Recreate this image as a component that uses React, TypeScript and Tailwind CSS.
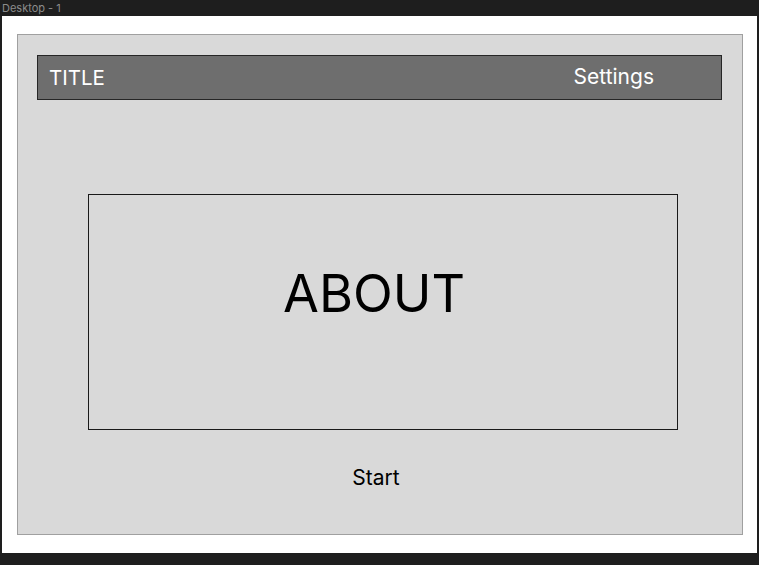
export default function App() {
  return (
    <div className="w-[759px] h-[565px] bg-[#1e1e1e] font-['Inter',sans-serif] overflow-hidden">
      <div className="h-[16px] pl-[2px] text-[11px] leading-[16px] text-[#8c8c8c]">Desktop - 1</div>

      <div className="ml-[2px] w-[755px] h-[537px] bg-white pt-[18px] pl-[15px]">
        <div className="w-[726px] h-[501px] border border-[#a0a0a0] bg-[#d9d9d9] pt-[20px]">
          <header className="ml-[19px] w-[685px] h-[45px] border border-[#262626] bg-[#6e6e6e] flex items-center justify-between pl-[11px] pr-[67px] text-[21px] leading-[24px] text-white">
            <span className="text-[20.5px]">TITLE</span>
            <span className="-mt-[2px]">Settings</span>
          </header>

          <section className="mt-[94px] ml-[70px] w-[590px] h-[236px] border border-[#1a1a1a] pt-[67px] pr-[18px] flex justify-center">
            <h1 className="text-[52px] leading-[63px] text-black">ABOUT</h1>
          </section>

          <div className="mt-[36px] pr-[8px] flex justify-center">
            <button className="text-[21px] leading-[24px] text-black">Start</button>
          </div>
        </div>
      </div>
    </div>
  )
}
